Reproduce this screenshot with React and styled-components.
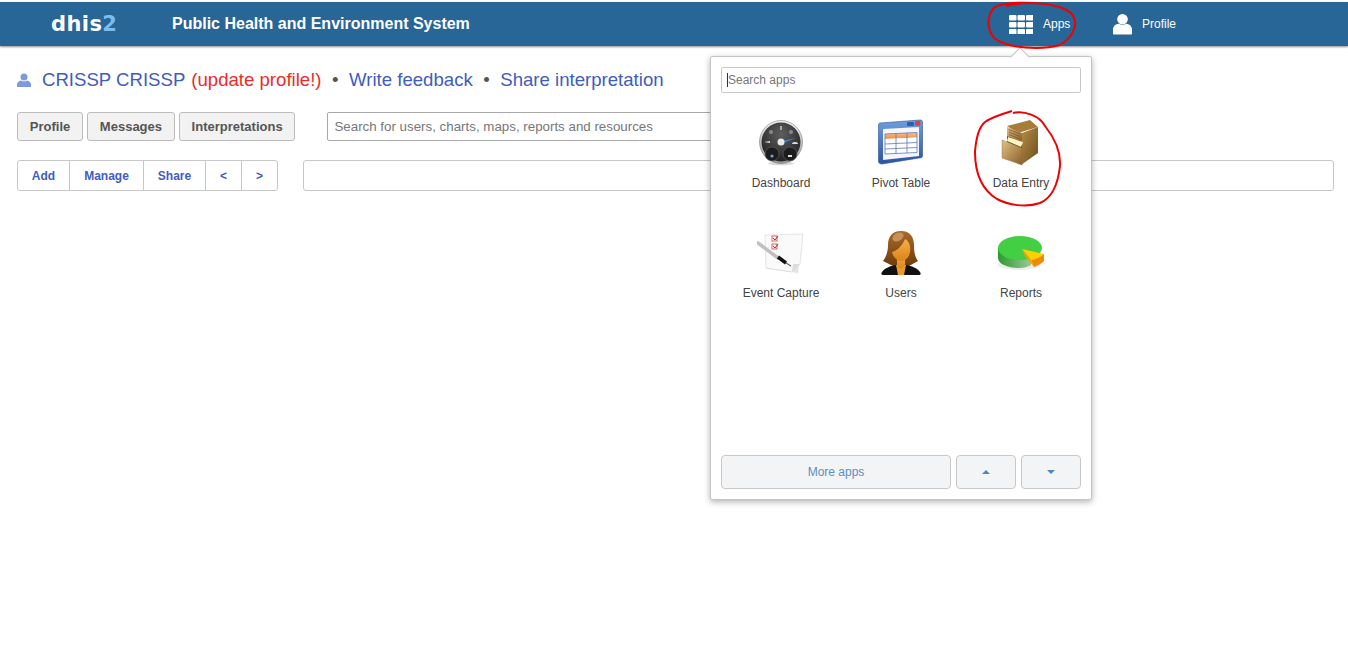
import React from 'react';
import styled, { createGlobalStyle } from 'styled-components';

const GlobalStyle = createGlobalStyle`
  html, body {
    margin: 0;
    padding: 0;
    background: #fff;
    font-family: "Liberation Sans", Arial, sans-serif;
  }
  * { box-sizing: border-box; }
`;

const Page = styled.div`
  position: relative;
  height: 645px;
  overflow: hidden;
  padding-top: 2px;
`;

const Header = styled.header`
  height: 44px;
  background: #276696;
  box-shadow: 0 1px 2px rgba(0, 0, 0, 0.45);
  display: flex;
  align-items: center;
  color: #fff;
  padding-left: 51px;
`;

const Logo = styled.div`
  width: 121px;
  font-family: "DejaVu Sans", sans-serif;
  font-weight: 700;
  font-size: 21px;
  letter-spacing: 0.4px;
  span { color: #7dbcf0; }
`;

const Title = styled.div`
  font-weight: 700;
  font-size: 16px;
  flex: 1;
`;

const NavItem = styled.div`
  display: flex;
  align-items: center;
  gap: ${(p) => p.$gap}px;
  width: ${(p) => p.$width}px;
  font-size: 12px;
`;

const Nav = styled.nav`
  display: flex;
  margin-right: 172px;
  margin-left: auto;
`;

const Content = styled.main`
  padding: 22px 14px 0 17px;
`;

const Intro = styled.div`
  display: flex;
  align-items: center;
  height: 24px;
  font-size: 18.6px;
  color: #3f5cc0;
  white-space: pre;
`;

const IntroIcon = styled.svg`
  width: 14px;
  height: 15px;
  margin-right: 11px;
`;

const Warn = styled.span`
  color: #ec2a2a;
  margin-left: 6px;
`;

const Dot = styled.span`
  color: #555;
  margin: 0 10.5px;
`;

const TabRow = styled.div`
  display: flex;
  margin-top: 20px;
  gap: 4px;
`;

const Tab = styled.div`
  height: 29px;
  padding: 0 11.8px;
  display: flex;
  align-items: center;
  font-size: 13px;
  font-weight: 700;
  color: #555;
  background: #f2f2f2;
  border: 1px solid #bcbcbc;
  border-radius: 3px;
`;

const GlobalSearch = styled.div`
  width: 600px;
  height: 29px;
  margin-left: 28px;
  padding-left: 6px;
  display: flex;
  align-items: center;
  font-size: 13.33px;
  color: #777;
  border: 1px solid #a8a8a8;
  border-radius: 2px;
`;

const ToolRow = styled.div`
  display: flex;
  margin-top: 19px;
  gap: 25px;
`;

const Segments = styled.div`
  display: flex;
  height: 31px;
  border: 1px solid #c8c8c8;
  border-radius: 3px;
`;

const Segment = styled.div`
  width: ${(p) => p.$width}px;
  display: flex;
  align-items: center;
  justify-content: center;
  font-size: 12px;
  font-weight: 700;
  color: #3f5cc0;
  border-left: ${(p) => (p.$first ? 'none' : '1px solid #c8c8c8')};
`;

const TitleBox = styled.div`
  flex: 1;
  height: 31px;
  border: 1px solid #c8c8c8;
  border-radius: 3px;
`;

const Popup = styled.div`
  position: absolute;
  left: 710px;
  top: 56px;
  width: 382px;
  height: 444px;
  padding: 10px;
  background: #fff;
  border: 1px solid #c4c4c4;
  border-radius: 2px;
  box-shadow: 0 2px 6px rgba(0, 0, 0, 0.3);
  display: flex;
  flex-direction: column;
  &::before {
    content: '';
    position: absolute;
    left: 302px;
    top: -7px;
    width: 13px;
    height: 13px;
    background: #fff;
    border-left: 1px solid #c4c4c4;
    border-top: 1px solid #c4c4c4;
    transform: rotate(45deg);
  }
`;

const AppSearch = styled.div`
  height: 26px;
  display: flex;
  align-items: center;
  padding-left: 5px;
  font-size: 12px;
  color: #777;
  border: 1px solid #c8c8c8;
  border-radius: 2px;
  position: relative;
  &::before {
    content: '';
    width: 1px;
    height: 14px;
    background: #333;
  }
`;

const AppGrid = styled.div`
  display: grid;
  grid-template-columns: repeat(3, 120px);
  grid-auto-rows: 110px;
  margin-top: 15px;
  flex: 1;
`;

const AppTile = styled.div`
  display: flex;
  flex-direction: column;
  align-items: center;
  padding-top: 10px;
  font-size: 12px;
  color: #444;
  svg { width: 48px; height: 48px; margin-bottom: 10px; display: block; }
`;

const PopupFooter = styled.div`
  display: flex;
  gap: 5px;
  height: 34px;
`;

const FooterButton = styled.div`
  flex: ${(p) => (p.$wide ? '1' : '0 0 60px')};
  display: flex;
  align-items: center;
  justify-content: center;
  background: #f3f4f6;
  border: 1px solid #c8c8c8;
  border-radius: 4px;
  font-size: 12px;
  color: #5a8fc4;
`;

const Caret = styled.span`
  width: 0;
  height: 0;
  border-left: 4px solid transparent;
  border-right: 4px solid transparent;
  ${(p) => (p.$up ? 'border-bottom: 4px solid #4a86c0;' : 'border-top: 4px solid #4a86c0;')}
`;

const Scribbles = styled.svg`
  position: absolute;
  left: 0;
  top: 0;
  width: 1348px;
  height: 645px;
  pointer-events: none;
  fill: none;
  stroke: #f00000;
  stroke-width: 2;
`;

const AppsGlyph = () => (
  <svg width="24" height="19" viewBox="0 0 24 19" fill="#fff">
    {[0, 7, 14].map((y) =>
      [0, 8.5, 17].map((x) => <rect key={`${x}-${y}`} x={x} y={y} width="7.5" height="5.5" rx="1" />)
    )}
  </svg>
);

const ProfileGlyph = () => (
  <svg width="20" height="22" viewBox="0 0 20 22" fill="#fff">
    <circle cx="10" cy="6" r="5.6" />
    <path d="M0 21v-4c0-4 3-6 6-6.2 2.4 1.6 5.600 1.600 8 0 3 .2 6 2.200 6 6.200v4c0 .6-.5 1-1 1H1c-.5 0-1-.4-1-1z" />
  </svg>
);

const DashboardIcon = () => (
  <svg viewBox="0 0 48 48">
    <defs>
      <radialGradient id="dial" cx="50%" cy="30%" r="75%">
        <stop offset="0" stopColor="#5e5e5e" />
        <stop offset="1" stopColor="#1e1e1e" />
      </radialGradient>
      <linearGradient id="rim" x1="0" y1="0" x2="0" y2="1">
        <stop offset="0" stopColor="#f4f4f4" />
        <stop offset="1" stopColor="#999" />
      </linearGradient>
    </defs>
    <ellipse cx="24" cy="45.500" rx="13" ry="1.800" fill="#d8d8d8" />
    <circle cx="24" cy="24" r="21.500" fill="url(#rim)" stroke="#666" strokeWidth="0.5" />
    <circle cx="24" cy="24" r="19.500" fill="url(#dial)" />
    <circle cx="15" cy="36" r="7" fill="#1c1c1c" stroke="#666" strokeWidth="0.6" />
    <circle cx="33" cy="36" r="7" fill="#1c1c1c" stroke="#666" strokeWidth="0.6" />
    <circle cx="15" cy="38" r="1.600" fill="#6aa4e6" />
    <rect x="31" y="37" width="4" height="2" fill="#ddd" />
    <circle cx="14" cy="14" r="2" fill="#8a8a8a" />
    <circle cx="34" cy="14" r="2" fill="#8a8a8a" />
    <rect x="23" y="8" width="2" height="4" fill="#aaa" />
    <path d="M7 24l6-1v2z" fill="#ddd" />
    <path d="M35 26a3 2 0 0 1 6 0z" fill="#ddd" />
    <path d="M25 23l14-3-13 5z" fill="#3a8ad8" />
    <circle cx="24" cy="24" r="3.500" fill="#e8e8e8" />
  </svg>
);

const PivotIcon = () => (
  <svg viewBox="0 0 48 48">
    <defs>
      <linearGradient id="win" x1="0" y1="0" x2="0" y2="1">
        <stop offset="0" stopColor="#6f9fe0" />
        <stop offset="1" stopColor="#2a54a0" />
      </linearGradient>
      <linearGradient id="stripe" x1="0" y1="0" x2="0" y2="1">
        <stop offset="0" stopColor="#f8c090" />
        <stop offset="1" stopColor="#f58c3a" />
      </linearGradient>
    </defs>
    <path d="M3 5l40-3c1.500 0 2.500.6 2.500 2v34c0 1-.5 1.600-1.500 1.700L5 46c-2 0-3.500-1-3.500-2.500V7c0-1.200.7-1.900 1.500-2z" fill="url(#win)" stroke="#2a4f90" strokeWidth="0.6" />
    <rect x="38" y="3" width="5.500" height="4.500" rx="1" fill="#d8434a" />
    <rect x="30" y="4" width="7" height="4" rx="1" fill="#2e5fa8" />
    <path d="M6 11l36-2v29L6 42z" fill="#f4f6fb" />
    <path d="M8 16l32-1.500v5L8 21z" fill="url(#stripe)" />
    <path d="M8 21l32-1.500v15L8 36z" fill="#fff" />
    <path d="M8 16l32-1.500v20L8 36zM8 26l32-1.500M8 31l32-1.500M19 15.500v20M30 15v20" stroke="#5d78b8" strokeWidth="0.8" fill="none" />
  </svg>
);

const CabinetIcon = () => (
  <svg viewBox="0 0 48 48">
    <defs>
      <linearGradient id="woodA" x1="0" y1="0" x2="1" y2="1">
        <stop offset="0" stopColor="#b68e48" />
        <stop offset="1" stopColor="#6e4c1c" />
      </linearGradient>
      <linearGradient id="woodB" x1="0" y1="0" x2="1" y2="1">
        <stop offset="0" stopColor="#e2c088" />
        <stop offset="1" stopColor="#8a5e28" />
      </linearGradient>
    </defs>
    <path d="M10 8l23-6 8 7-20 6z" fill="#a67c38" />
    <path d="M25 15l16-6v26l-17 12 1-16z" fill="url(#woodA)" />
    <path d="M10 9l15 6v8L10 18z" fill="url(#woodB)" />
    <path d="M12 11.500l11 4.500M12 14l11 4.500M12 16.500l11 4.500" stroke="#7e5a26" strokeWidth="0.8" fill="none" />
    <path d="M10 18l15 5v8L10 24z" fill="#5e4018" />
    <path d="M11 19l15 5-2 5-14-6z" fill="#fff3c0" />
    <path d="M5 22l20 8v17L5 40z" fill="url(#woodB)" stroke="#8f6630" strokeWidth="0.4" />
  </svg>
);

const EventIcon = () => (
  <svg viewBox="0 0 48 48">
    <path d="M10 9l35 1-4 35-31-4z" fill="#e4e4e4" />
    <path d="M8 7l38-1-3 30-8 8-26-4z" fill="#fafafa" stroke="#d4d4d4" strokeWidth="0.6" />
    <path d="M35 44l1-8 7 0z" fill="#dcdcdc" />
    <rect x="15" y="8" width="5" height="5" fill="#fff" stroke="#c44" strokeWidth="0.8" />
    <rect x="15" y="16" width="5" height="5" fill="#fff" stroke="#c44" strokeWidth="0.8" />
    <path d="M16 10l2 2 3-4M16 18l2 2 3-4" stroke="#b22" strokeWidth="1" fill="none" />
    <path d="M1 15l20 15" stroke="#c0c0c0" strokeWidth="3.500" strokeLinecap="round" />
    <path d="M21 29l8 6" stroke="#111" strokeWidth="3.500" />
    <path d="M29 35l5 3" stroke="#666" strokeWidth="1.200" />
  </svg>
);

const UsersIcon = () => (
  <svg viewBox="0 0 48 48">
    <defs>
      <linearGradient id="hair" x1="0" y1="0" x2="0" y2="1">
        <stop offset="0" stopColor="#a86a2a" />
        <stop offset="1" stopColor="#6e3c0c" />
      </linearGradient>
      <linearGradient id="skin" x1="0" y1="0" x2="0" y2="1">
        <stop offset="0" stopColor="#f6b04a" />
        <stop offset="1" stopColor="#d98418" />
      </linearGradient>
    </defs>
    <path d="M24 3c9 0 13 6 13 14 0 7 1 12 4 16l-9 5H16l-10-5c3-4 5-9 5-16 0-8 4-14 13-14z" fill="url(#hair)" />
    <ellipse cx="21" cy="9" rx="6" ry="4" fill="#c69258" transform="rotate(-30 21 9)" />
    <path d="M6 47c-2 0-2-2-1-3 3-4 8-6 14-7h10c6 1 11 3 14 7 1 1 1 3-1 3z" fill="#111" />
    <path d="M19 37h10l-2 10h-6z" fill="#e89a2c" />
    <path d="M20 27h8v10l-4 4-4-4z" fill="url(#skin)" />
    <path d="M28 11c4 2 6 7 5 13-1 6-5 9-9 9s-8-4-9-9c4-1 10-5 13-13z" fill="url(#skin)" />
  </svg>
);

const ReportsIcon = () => (
  <svg viewBox="0 0 48 48">
    <defs>
      <linearGradient id="pieSide" x1="0" y1="0" x2="1" y2="0">
        <stop offset="0" stopColor="#2c9a2c" />
        <stop offset="1" stopColor="#9ac89a" />
      </linearGradient>
    </defs>
    <ellipse cx="22" cy="37" rx="21" ry="5" fill="#ececec" />
    <path d="M1 20v10c0 6 10 10 21 10 5 0 9-1 12-3V20z" fill="url(#pieSide)" />
    <ellipse cx="23" cy="20" rx="22" ry="12" fill="#43cf43" />
    <path d="M25 21l22 5c-3 3-8 5-13 6z" fill="#ffd000" />
    <path d="M34 32c5-1 10-3 13-6v7c-3 3-7 5-10 6z" fill="#f08a00" />
    <path d="M25 21l9 11 3 7-9-11z" fill="#f5a000" />
  </svg>
);

const apps = [
  ['Dashboard', DashboardIcon],
  ['Pivot Table', PivotIcon],
  ['Data Entry', CabinetIcon],
  ['Event Capture', EventIcon],
  ['Users', UsersIcon],
  ['Reports', ReportsIcon],
];

const App = () => (
  <Page>
    <GlobalStyle />
    <Header>
      <Logo>dhis<span>2</span></Logo>
      <Title>Public Health and Environment System</Title>
      <Nav>
        <NavItem $gap={10} $width={104}><AppsGlyph />Apps</NavItem>
        <NavItem $gap={10} $width={63}><ProfileGlyph />Profile</NavItem>
      </Nav>
    </Header>
    <Content>
      <Intro>
        <IntroIcon viewBox="0 0 14 15" fill="#7f9ad8">
          <circle cx="7" cy="4" r="3.500" />
          <path d="M0 14v-2.500c0-2 2-3.500 4-4 2 1.200 4 1.200 6 0 2 .5 4 2 4 4V14z" />
        </IntroIcon>
        CRISSP CRISSP<Warn>(update profile!)</Warn><Dot>•</Dot>Write feedback<Dot>•</Dot>Share interpretation
      </Intro>
      <TabRow>
        <Tab>Profile</Tab>
        <Tab>Messages</Tab>
        <Tab>Interpretations</Tab>
        <GlobalSearch>Search for users, charts, maps, reports and resources</GlobalSearch>
      </TabRow>
      <ToolRow>
        <Segments>
          <Segment $first $width={51}>Add</Segment>
          <Segment $width={74}>Manage</Segment>
          <Segment $width={62}>Share</Segment>
          <Segment $width={36}>&lt;</Segment>
          <Segment $width={36}>&gt;</Segment>
        </Segments>
        <TitleBox />
      </ToolRow>
    </Content>
    <Popup>
      <AppSearch>Search apps</AppSearch>
      <AppGrid>
        {apps.map(([label, Icon]) => (
          <AppTile key={label}>
            <Icon />
            {label}
          </AppTile>
        ))}
      </AppGrid>
      <PopupFooter>
        <FooterButton $wide>More apps</FooterButton>
        <FooterButton><Caret $up /></FooterButton>
        <FooterButton><Caret /></FooterButton>
      </PopupFooter>
    </Popup>
    {/* hand-drawn red annotations */}
    <Scribbles viewBox="0 0 1348 645">
      <path d="M1006 6C1024 1 1058 2 1071 13C1079 22 1075 36 1060 45C1042 50 1008 49 994 38C986 28 987 14 995 7C1002 3 1016 2 1034 3" />
      <path d="M1013 113C1024 110 1040 116 1045 126C1053 136 1061 150 1060 166C1058 184 1052 198 1040 203C1026 208 1008 205 997 199C984 191 975 176 975 152C976 138 979 127 985 122C992 117 1002 114 1012 111" />
    </Scribbles>
  </Page>
);

export default App;
